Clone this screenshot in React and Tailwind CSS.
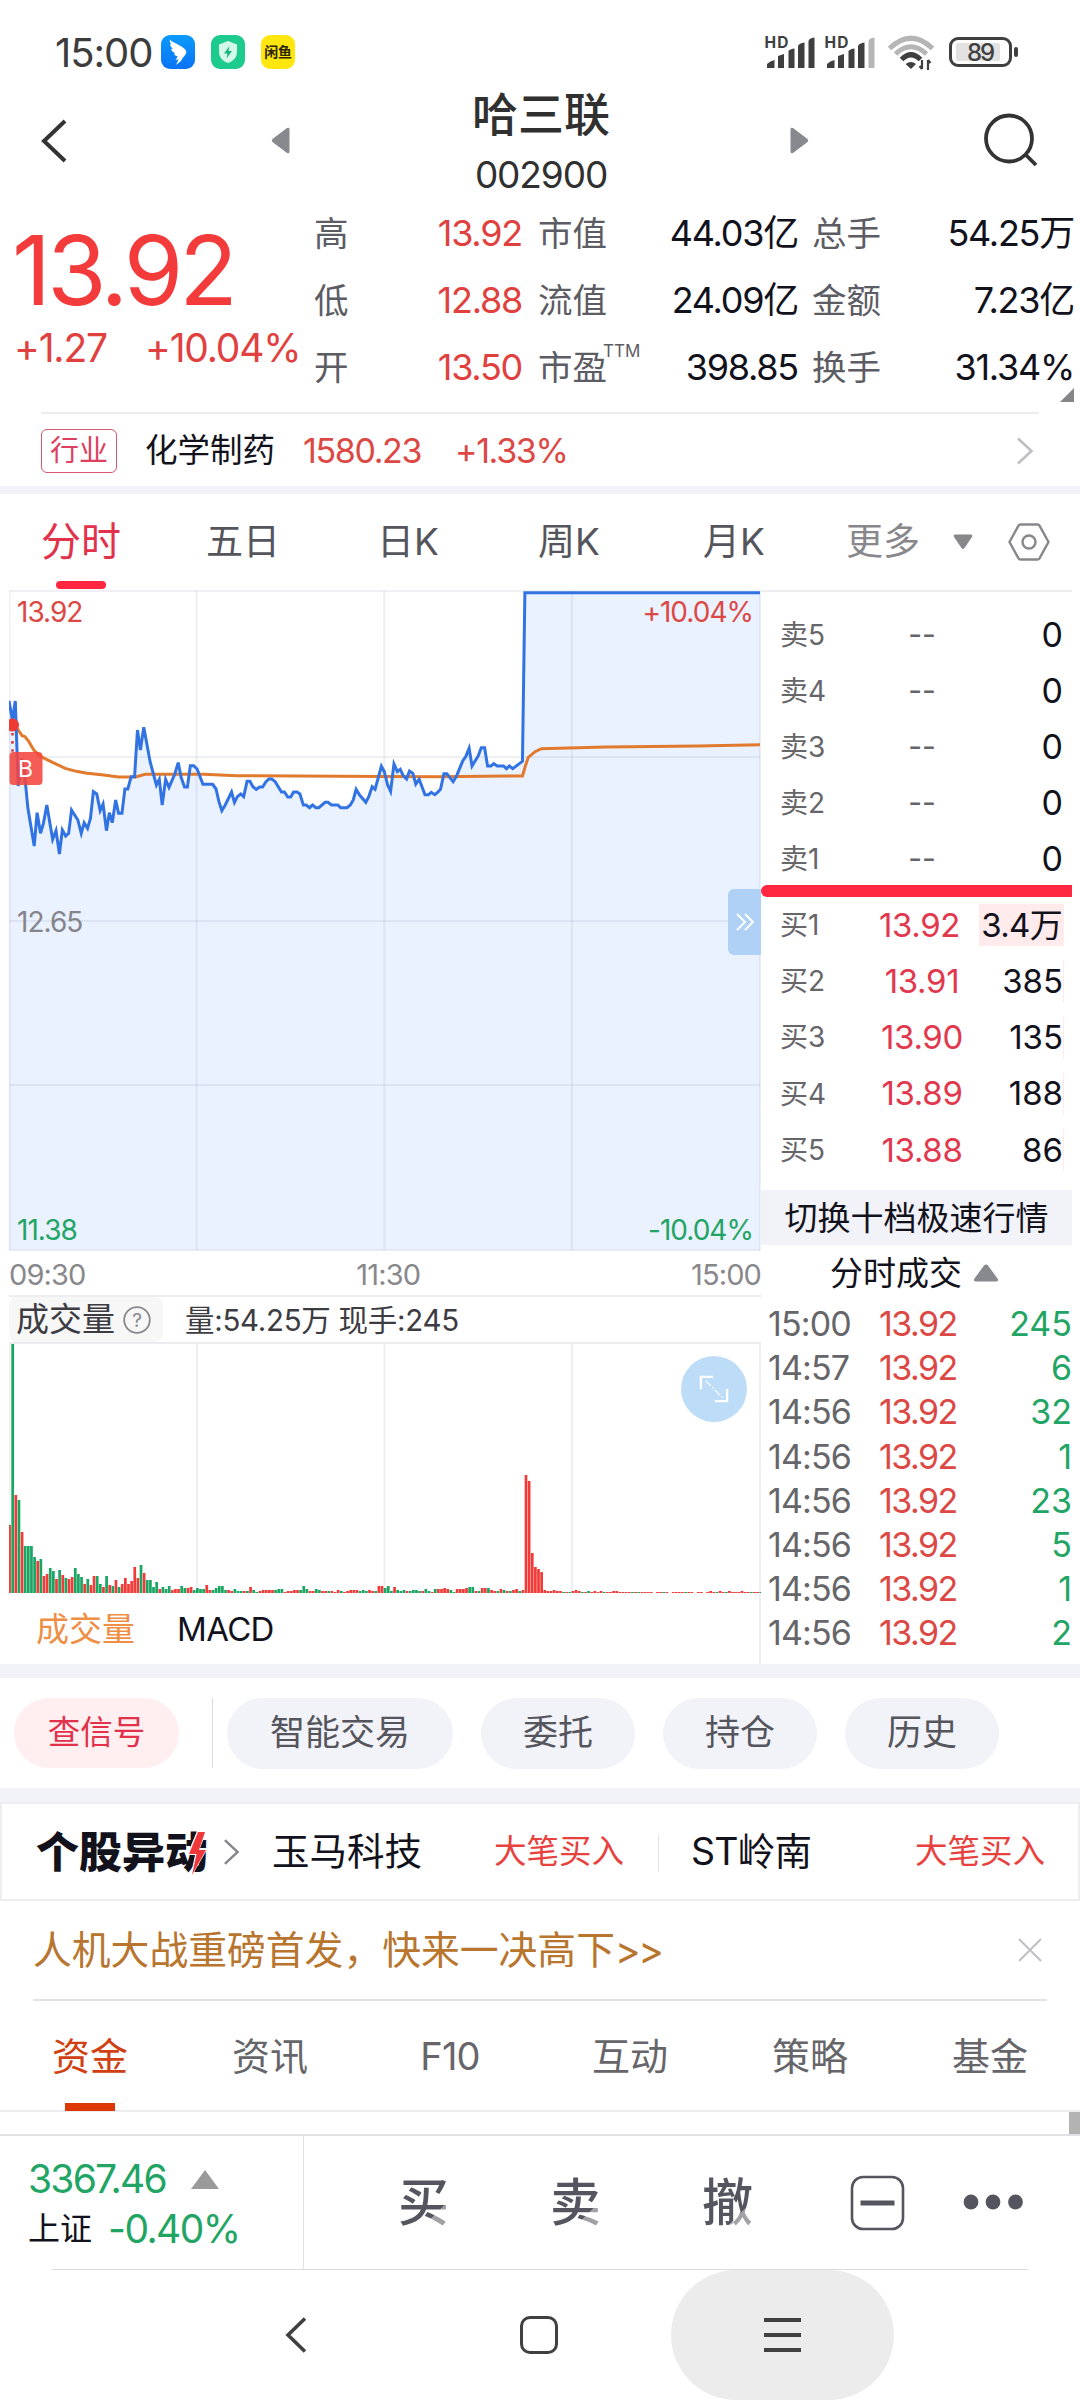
import React from "react";

const stats = [
  [
    { label: "高", value: "13.92" },
    { label: "低", value: "12.88" },
    { label: "开", value: "13.50" },
  ],
  [
    { label: "市值", value: "44.03亿" },
    { label: "流值", value: "24.09亿" },
    { label: "市盈", value: "398.85", sup: "TTM" },
  ],
  [
    { label: "总手", value: "54.25万" },
    { label: "金额", value: "7.23亿" },
    { label: "换手", value: "31.34%" },
  ],
];

const statStyles = [
  "ml-[314px] w-[208px] text-[#e0413f]",
  "ml-[16px] w-[260px] text-[#12121c]",
  "ml-[14px] w-[262px] text-[#12121c]",
];

const sells = ["卖5", "卖4", "卖3", "卖2", "卖1"];

const buys = [
  { label: "买1", price: "13.92", count: "3.4万" },
  { label: "买2", price: "13.91", count: "385" },
  { label: "买3", price: "13.90", count: "135" },
  { label: "买4", price: "13.89", count: "188" },
  { label: "买5", price: "13.88", count: "86" },
];

const trades = [
  ["15:00", "245"],
  ["14:57", "6"],
  ["14:56", "32"],
  ["14:56", "1"],
  ["14:56", "23"],
  ["14:56", "5"],
  ["14:56", "1"],
  ["14:56", "2"],
  ["14:56", "24"],
];

// price curve, x in minutes * 6.46, y grows downwards
const pricePoints =
  "19,633 26,690 32,633 38,888 45,806 51,850 58,955 71,1068 77,968 84,1030 90,1000 97,945 109,1048 116,1022 123,1092 129,1020 136,1038 142,1030 148,960 161,990 168,1030 174,998 181,1015 187,985 193,905 200,912 207,962 213,942 220,1022 226,968 232,998 239,930 245,970 252,970 258,897 264,897 271,860 278,860 284,720 290,780 297,712 310,815 323,885 329,868 335,945 342,868 349,892 361,852 368,818 374,862 381,891 387,891 393,827 400,827 407,837 419,883 439,883 446,897 452,935 458,962 465,945 478,906 484,937 490,920 497,912 503,920 510,874 516,874 522,890 529,898 536,891 542,891 549,875 555,867 561,867 568,875 581,906 587,906 594,921 600,921 606,906 613,906 619,912 626,945 632,945 639,953 645,945 652,953 658,953 671,937 677,937 684,945 697,945 703,953 716,953 723,945 729,930 735,898 742,915 755,937 761,920 768,890 774,898 787,829 793,845 800,885 806,904 813,822 820,845 826,838 832,857 839,867 845,843 852,850 858,882 865,868 877,914 884,914 890,907 897,914 903,907 909,898 916,851 922,851 935,875 942,858 955,812 961,800 968,775 974,828 987,797 993,773 1000,773 1006,828 1013,828 1019,821 1026,828 1039,828 1045,836 1051,828 1058,836 1078,814 1083,308 1568,308";

const avgPoints =
  "27,690 38,720 46,737 52,740 60,755 71,782 85,800 110,818 135,835 158,844 180,850 210,854 245,861 280,861 300,853 420,853 490,857 700,859 900,860 1078,858 1084,828 1090,802 1104,785 1117,776 1250,771 1440,768 1568,764";

const volumes =
  "r68 g250 r98 g93 r61 g47 g47 g47 g36 r32 g34 r17 r19 g25 g22 r14 g23 r18 g15 r14 r16 g25 g19 g16 r9 g14 r8 r17 g17 g9 r6 g17 r8 g7 r13 g6 r9 r15 r9 r12 r26 r15 g28 r20 g13 g13 g6 g11 r4 g6 g4 g7 r3 r4 r4 g7 g5 r5 r6 g3 g5 g4 g4 r8 r3 g3 g5 g7 g7 g3 r3 r2 g4 g2 g2 r2 g2 r6 g3 g1 r2 r3 r3 r3 r3 g3 g4 g4 r1 r2 r2 r3 r3 g3 g7 g4 r2 r2 g4 g3 r2 r2 g2 r2 r1 r3 g2 r1 r2 r3 r3 r3 g2 g3 g2 r3 r2 g2 r7 r7 g5 g7 g2 r6 g3 g2 g3 r2 g2 g3 g3 g2 r2 g4 g2 r1 g4 r4 r4 r5 r4 g3 g1 r4 r4 r4 r5 g6 g6 r2 g2 r5 r5 g5 r3 r2 g2 r4 g3 r2 g2 r3 r4 g2 r3 r118 r112 r40 r26 r24 r21 r3 r2 r2 r3 r2 r2 g1 r1 g1 r2 r3 r2 g1 r1 g2 r1 r2 r1 r2 g1 r1 r1 r2 r2 r1 r1 r1 r1 g1 r1 g1 r1 r1 r1 r1 g0 r1 r1 g1 r1 r0 r1 r1 r1 r1 g1 r1 r1 r0 r1 r1 g0 r1 r2 r1 g1 r2 r1 g1 r2 r1 r1 r1 r2 r1 r1 g1 r1 r1 g1 g0 r0 r2".split(
    " "
  );

const RightChevron = ({ className, color }) => (
  <svg className={className} viewBox="0 0 18 28" fill="none" stroke={color} strokeWidth="2.6">
    <path d="M2 1.5 L15.5 14 L2 26.5" />
  </svg>
);

const StatusBar = () => (
  <div className="flex h-[88px] items-center pt-[16px] pl-[55px]">
    <span className="w-[106px] pt-px text-[40px] tracking-[-0.025em] text-[#3c3c3c]">15:00</span>
    <div className="flex gap-4">
      <svg className="h-[34px] w-[34px]" viewBox="0 0 34 34">
        <defs>
          <linearGradient id="wing" x1="0" y1="0" x2="0" y2="1">
            <stop offset="0" stopColor="#0a9bfb" />
            <stop offset="1" stopColor="#0a72f6" />
          </linearGradient>
        </defs>
        <rect width="34" height="34" rx="9" fill="url(#wing)" />
        <path
          d="M9 4.5 C9.5 6 12 7 14.5 8.3 C18.5 10.4 25 13.5 25.3 16.8 C25 19.5 23 21.5 21.2 23.8 L20 26 L15 30 L17.5 24.5 L14.5 24.8 L16.8 21.5 C14.5 21 13.3 20 12.8 18.8 L14.5 18.5 C11.5 17 10.3 15.5 10.2 13.8 L12 14 C9.8 12 9 10.5 9.2 9 L10.5 9.3 C8.800 7.5 8.5 6 9 4.5 Z"
          fill="#fff"
        />
      </svg>
      <svg className="h-[34px] w-[34px]" viewBox="0 0 34 34">
        <rect width="34" height="34" rx="9" fill="#1ecb8f" />
        <path d="M17 6 L26 9.5 V17 C26 22 22.5 26 17 28 C11.5 26 8 22 8 17 V9.5 Z" fill="#d6f8ec" />
        <path d="M18.5 11 L13 18.5 H16.5 L15.5 23.5 L21 16 H17.5 Z" fill="#14b57c" />
      </svg>
      <div className="flex h-[34px] w-[34px] items-center justify-center rounded-[9px] bg-[#ffe60f] text-[14px] font-bold tracking-tight text-[#2a2600]">
        闲鱼
      </div>
    </div>
    <svg className="ml-[468px] h-[38px] w-[260px]" viewBox="763 33 260 38">
      <g fill="#3f3f3f">
        <path d="M767 68 V64 Q770 61 774.5 60 V68 Z M778 68 V56 L784 54 V68 Z M788.5 68 V51 Q790 49 794.5 48.5 V68 Z M798 68 V46 Q799 43 804.5 42.5 V68 Z M808.5 68 V41 Q809 38 814.5 37.5 V68 Z" />
        <path d="M827 68 V64 Q830 61 834.5 60 V68 Z M838 68 V56 L844 54 V68 Z M848.5 68 V51 Q850 49 854.5 48.5 V68 Z M858 68 V46 Q859 43 864.5 42.5 V68 Z" />
        <path d="M868.5 68 V41 Q869 38 874.5 37.5 V68 Z" fill="#b5b5b5" />
        <text x="764.5" y="48" fontSize="15.5" fontWeight="700" textLength="24">HD</text>
        <text x="824.5" y="48" fontSize="15.5" fontWeight="700" textLength="24">HD</text>
        <path d="M905.5 64 Q911 60 916 64 L911 69 Z" />
        <path d="M922 60 V69 M919.5 66 L922 69 M928 70 V60 M930.5 63 L928 60" stroke="#3f3f3f" strokeWidth="2.2" />
      </g>
      <g fill="none" strokeWidth="5">
        <path d="M889.5 48.5 Q911 28 932.5 48.5" stroke="#b5b5b5" />
        <path d="M895.5 54 Q911 39.5 926.5 54" stroke="#b5b5b5" />
        <path d="M901.5 59.5 Q911 50 920.5 59.5" stroke="#3f3f3f" />
      </g>
      <rect x="956" y="43" width="44" height="18" rx="2" fill="#e2e2e2" />
      <rect x="950.5" y="38.5" width="60" height="27" rx="7.5" fill="none" stroke="#3f3f3f" strokeWidth="3" />
      <rect x="1014" y="47" width="4" height="10" rx="2" fill="#3f3f3f" />
      <text x="981" y="60.5" fontSize="24" fontWeight="500" fill="#3f3f3f" textAnchor="middle" textLength="28">89</text>
    </svg>
  </div>
);

const Header = () => (
  <div className="flex h-[111px] items-start text-[#303030]">
    <svg className="mt-[30px] ml-[40px] h-[46px] w-[28px]" viewBox="0 0 28 46" fill="none" stroke="#333" strokeWidth="4">
      <path d="M25 3 L4 23 L25 43" />
    </svg>
    <svg className="mt-[39px] ml-[203px] h-[27px] w-[19px]" viewBox="0 0 19 27">
      <path d="M18.5 2 V25 Q18 27 16 26 L1.5 15 Q0 13.5 1.5 12 L16 1 Q18 0 18.5 2 Z" fill="#88888f" />
    </svg>
    <div className="ml-[151px] flex w-[200px] flex-col items-center">
      <div className="flex h-[54px] items-center text-[46px] font-medium">哈三联</div>
      <div className="flex h-[66px] items-center text-[37px] tracking-[-0.03em]">002900</div>
    </div>
    <svg className="mt-[39px] ml-[149px] h-[27px] w-[19px]" viewBox="0 0 19 27">
      <path d="M0.5 2 V25 Q1 27 3 26 L17.5 15 Q19 13.5 17.5 12 L3 1 Q1 0 0.5 2 Z" fill="#88888f" />
    </svg>
    <svg className="mt-[25px] ml-[174px] h-[56px] w-[58px]" viewBox="0 0 58 56" fill="none" stroke="#333" strokeWidth="3.8">
      <circle cx="26" cy="25.5" r="23" />
      <path d="M42 41 L53 52" />
    </svg>
  </div>
);

const Quote = () => (
  <div className="relative flex h-[213px] pt-px">
    <div className="absolute top-[15px] left-[12px]">
      <div className="flex h-[112px] items-center text-[96px] tracking-[-0.04em] text-[#f43b3b]">13.92</div>
      <div className="flex h-[44px] items-center pl-[2px] text-[39px] tracking-[-0.03em] whitespace-nowrap text-[#e0413f]">
        <span className="w-[131px]">+1.27</span>
        <span>+10.04%</span>
      </div>
    </div>
    {stats.map((col, i) => (
      <div key={i} className={`flex flex-col ${statStyles[i]}`}>
        {col.map((item) => (
          <div key={item.label} className="flex h-[67px] items-center justify-between text-[36px] tracking-[-0.035em]">
            <span className="relative text-[34.5px] tracking-normal text-[#5c5c64]">
              {item.label}
              {item.sup && <span className="absolute top-[-5px] left-[65px] text-[17px]">{item.sup}</span>}
            </span>
            <span>{item.value}</span>
          </div>
        ))}
      </div>
    ))}
    <svg className="absolute right-[6px] bottom-[10px] h-[14px] w-[14px]" viewBox="0 0 14 14">
      <path d="M14 0 V14 H0 Z" fill="#85858a" />
    </svg>
  </div>
);

const Industry = () => (
  <div className="mx-[41px] flex h-[74px] items-center border-t-2 border-[#ececee] pt-[2px]">
    <div className="flex h-[44px] w-[76px] items-center justify-center rounded-md border-[1.5px] border-[#d9566f] text-[29px] text-[#dd3f5e]">
      行业
    </div>
    <span className="ml-[28px] w-[158px] text-[32.5px] text-[#12121c]">化学制药</span>
    <span className="w-[152px] text-[34px] tracking-[-0.04em] text-[#dc4844]">1580.23</span>
    <span className="text-[34px] tracking-[-0.04em] text-[#dc4844]">+1.33%</span>
    <RightChevron className="ml-auto mr-[5px] h-[28px] w-[18px]" color="#bfbfc3" />
  </div>
);

const PeriodTabs = () => (
  <div className="flex h-[96px] items-center text-[37px] text-[#55555d]">
    <div className="relative ml-[41px] w-[165px] text-[40px] text-[#e2314a]">
      分时
      <span className="absolute -bottom-[22px] left-[15px] h-[8px] w-[50px] rounded-full bg-[#ff2840]" />
    </div>
    <span className="w-[171px]">五日</span>
    <span className="w-[161px]">日K</span>
    <span className="w-[165px]">周K</span>
    <span className="w-[143px]">月K</span>
    <span className="w-[107px] text-[#88888c]">更多</span>
    <svg className="h-[16px] w-[20px]" viewBox="0 0 20 16">
      <path d="M2 0.5 H18 Q20 1 19 3 L11.5 14 Q10 16 8.5 14 L1 3 Q0 1 2 0.5 Z" fill="#88888c" />
    </svg>
    <svg className="ml-[35px] h-[38px] w-[42px]" viewBox="0 0 42 38" fill="none" stroke="#88888c" strokeWidth="2.4">
      <path d="M12.5 1.5 H29.5 Q30.8 1.5 31.5 2.7 L40.5 19 L31.5 35.3 Q30.8 36.5 29.5 36.5 H12.5 Q11.2 36.5 10.5 35.3 L1.5 19 L10.5 2.7 Q11.2 1.5 12.5 1.5 Z" />
      <circle cx="21" cy="19" r="6.5" />
    </svg>
  </div>
);

const PriceChart = () => (
  <div className="relative h-[661px] w-[752px] text-[28px] tracking-[-0.035em]">
    <svg className="h-full w-full" viewBox="19 300 1551 1983" preserveAspectRatio="none">
      <polygon points={`19,2281 ${pricePoints} 1568,2281`} fill="#eaf1ff" />
      <g stroke="#8088a0" strokeOpacity="0.13" strokeWidth="2" fill="none">
        {[20, 406, 793, 1180, 1568].map((x) => (
          <path key={x} d={`M${x} 303 V2281`} vectorEffect="non-scaling-stroke" />
        ))}
        {[303, 801, 1293, 1785, 2281].map((y) => (
          <path key={y} d={`M19 ${y} H1568`} vectorEffect="non-scaling-stroke" />
        ))}
      </g>
      <polyline points={avgPoints} fill="none" stroke="#e27a2e" strokeWidth="3" vectorEffect="non-scaling-stroke" />
      <polyline points={pricePoints} fill="none" stroke="#3273e3" strokeWidth="3" vectorEffect="non-scaling-stroke" />
    </svg>
    <svg className="absolute top-[124px] left-0 h-[73px] w-[36px]" viewBox="0 0 36 73">
      <circle cx="3.5" cy="11" r="6.5" fill="#ee3a33" />
      <path d="M3.5 19 V38" stroke="#d8433f" strokeWidth="2.6" strokeDasharray="2.6 5.5" />
      <rect x="0.5" y="38" width="33" height="33" rx="4" fill="#f4453f" fillOpacity="0.88" />
      <text x="16" y="63" fontSize="23" fill="#fff" textAnchor="middle">B</text>
    </svg>
    <span className="absolute top-[5px] left-[8px] text-[#dc4844]">13.92</span>
    <span className="absolute top-[5px] right-[8px] text-[#dc4844]">+10.04%</span>
    <span className="absolute top-[315px] left-[8px] text-[#85858c]">12.65</span>
    <span className="absolute bottom-[3px] left-[8px] text-[#22a564]">11.38</span>
    <span className="absolute right-[8px] bottom-[3px] text-[#22a564]">-10.04%</span>
    <div className="absolute top-[299px] right-0 flex h-[66px] w-[33px] items-center justify-center rounded-l-md bg-[#aed1f5]">
      <svg className="h-[18px] w-[20px]" viewBox="0 0 20 18" fill="none" stroke="#fff" strokeWidth="2">
        <path d="M2 1 L10 9 L2 17 M10 1 L18 9 L10 17" />
      </svg>
    </div>
  </div>
);

const VolumeChart = () => (
  <div className="relative h-[251px] w-[752px] border-t-2 border-[#ececee]">
    <svg className="h-full w-full" viewBox="0 0 752 249">
      <path d="M0.5 0 V249 M188 0 V249 M375.5 0 V249 M563 0 V249 M751 0 V249" stroke="#f0f0f2" strokeWidth="2" />
      {volumes.map((v, i) => (
        <rect
          key={i}
          x={i * 3.13 - 0.8}
          y={249 - Number(v.slice(1))}
          width="2.7"
          height={v.slice(1)}
          fill={v[0] === "r" ? "#f03b38" : "#1aa562"}
        />
      ))}
    </svg>
    <div className="absolute top-[12px] right-[14px] flex h-[66px] w-[66px] items-center justify-center rounded-full bg-[#bcdcf7]">
      <svg className="h-[30px] w-[30px]" viewBox="0 0 32 32" fill="none" stroke="#fff" strokeWidth="2.4">
        <path d="M2 16 V3 H15 M30 16 V29 H17" />
        <path d="M7 7 L26 26" strokeWidth="1.3" strokeDasharray="8 2 2 2" />
      </svg>
    </div>
  </div>
);

const ChartPanel = () => (
  <div className="h-[1074px] w-[761px] pl-[9px]">
    <PriceChart />
    <div className="flex h-[46px] items-center justify-between border-b-2 border-[#ededf0] pt-[4px] text-[29px] tracking-[-0.03em] text-[#88888c]">
      <span>09:30</span>
      <span>11:30</span>
      <span>15:00</span>
    </div>
    <div className="flex h-[45px] items-center text-[#3c3c42]">
      <div className="flex h-full w-[154px] items-center rounded-lg bg-[#f7f7f8] pt-px pl-[7px] text-[33px]">
        成交量
        <svg className="ml-[8px] h-[28px] w-[28px]" viewBox="0 0 28 28">
          <circle cx="14" cy="14" r="12.8" fill="none" stroke="#88888c" strokeWidth="1.8" />
          <text x="14" y="20.5" fontSize="19" fill="#88888c" textAnchor="middle">?</text>
        </svg>
      </div>
      <span className="ml-[22px] pt-[2px] text-[29.5px] tracking-[-0.01em]">量:54.25万 现手:245</span>
    </div>
    <VolumeChart />
    <div className="flex h-[71px] items-center border-r-2 border-[#ededf0] pt-[2px] pl-[27px] text-[33px]">
      <span className="w-[141px] text-[#ef8e45]">成交量</span>
      <span className="tracking-[-0.02em] text-[#12121c]">MACD</span>
    </div>
  </div>
);

const OrderBook = () => (
  <div className="h-[1074px] w-[311px] overflow-hidden border-t-2 border-[#ececee] pt-[15px]">
    {sells.map((label) => (
      <div key={label} className="flex h-[56px] items-center pl-[19px] pr-[9px] text-[34px] text-[#12121c]">
        <span className="w-[81px] text-[28px] text-[#66666a]">{label}</span>
        <span className="w-[122px] text-center text-[30px] text-[#66666a]">--</span>
        <span className="flex-1 text-right">0</span>
      </div>
    ))}
    <div className="-mt-[2px] h-[12px] rounded-l-full bg-[#ff2840]" />
    {buys.map((row, i) => (
      <div key={row.label} className="flex h-[56.3px] items-center pl-[19px] pr-[8px] text-[33px] text-[#12121c]">
        <span className="w-[81px] text-[28px] text-[#66666a]">{row.label}</span>
        <span className="w-[122px] text-center tracking-[-0.01em] text-[#e2384d]">{row.price}</span>
        <span
          className={`ml-auto flex h-[42px] items-center justify-end ${i === 0 ? "w-[86px] bg-[#ffeaec] pr-[2px] tracking-[-0.02em]" : "border-r border-[#ffeaec]"}`}
        >
          {row.count}
        </span>
      </div>
    ))}
    <div className="mt-[12px] flex h-[55px] items-center justify-center bg-[#f2f3f8] pt-px text-[33px] text-[#12121c]">
      切换十档极速行情
    </div>
    <div className="flex h-[55px] items-center pt-px pl-[69px] text-[33px] text-[#12121c]">
      分时成交
      <svg className="ml-[11px] h-[18px] w-[26px]" viewBox="0 0 26 18">
        <path d="M2.5 17.5 Q0 17 1.5 14.5 L11 1.5 Q13 -0.5 15 1.5 L24.5 14.5 Q26 17 23.5 17.5 Z" fill="#88888f" />
      </svg>
    </div>
    <div className="pt-[2px]">
      {trades.map(([time, count], i) => (
        <div key={i} className="flex h-[44.1px] items-center pl-[7px] text-[34px]">
          <span className="w-[111px] tracking-[-0.025em] text-[#66666a]">{time}</span>
          <span className="tracking-[-0.045em] text-[#dc4844]">13.92</span>
          <span className="ml-auto text-[#22a564]">{count}</span>
        </div>
      ))}
    </div>
  </div>
);

const Shortcuts = () => (
  <div className="flex h-[110px] items-center pl-[14px] text-[35px] text-[#55555d]">
    <div className="flex h-[70px] w-[165px] items-center justify-center rounded-full bg-[#ffeff0] text-[32.5px] text-[#e2314a]">
      查信号
    </div>
    <div className="mr-[14px] ml-[33px] h-[70px] w-px bg-[#dcdce0]" />
    <div className="flex h-[71px] w-[226px] items-center justify-center rounded-full bg-[#f2f3f8]">智能交易</div>
    {["委托", "持仓", "历史"].map((name) => (
      <div key={name} className="ml-[28px] flex h-[71px] w-[154px] items-center justify-center rounded-full bg-[#f2f3f8]">
        {name}
      </div>
    ))}
  </div>
);

const Movers = () => (
  <div className="flex h-[99px] items-center border-2 border-[#ededef] pt-[2px] pl-[34px] text-[37.5px] text-[#12121c]">
    <div className="relative w-[187px] text-[43px] font-black text-[#12121c]">
      个股异动
      <svg className="absolute top-[5px] left-[149px] h-[48px] w-[24px]" viewBox="0 0 24 48">
        <path d="M12 0 H22 L15 17 H23 L5 48 L10 24 H2 Z" fill="#fff" />
        <path d="M13 1 H20 L14 19 H21 L7 44 L11.5 23 H4 Z" fill="#f0383c" />
      </svg>
    </div>
    <RightChevron className="-mt-px h-[28px] w-[17px]" color="#88888c" />
    <span className="ml-[32px] w-[222px]">玉马科技</span>
    <span className="w-[164px] text-[32.5px] text-[#e8423e]">大笔买入</span>
    <span className="h-[38px] w-px bg-[#e6e6ea]" />
    <span className="ml-[32px] w-[224px] tracking-[-0.02em]">ST岭南</span>
    <span className="text-[32.5px] text-[#e8423e]">大笔买入</span>
  </div>
);

const Promo = () => (
  <div className="mx-[33px] flex h-[100px] items-center justify-between border-b-2 border-[#e2e2e4] text-[38.8px] text-[#b8752e]">
    <span>
      人机大战重磅首发，快来一决高下<span className="tracking-[-0.06em]">&gt;&gt;</span>
    </span>
    <svg className="mr-[5px] h-[24px] w-[24px]" viewBox="0 0 24 24" stroke="#bfbfc3" strokeWidth="2">
      <path d="M1 1 L23 23 M23 1 L1 23" />
    </svg>
  </div>
);

const InfoTabs = () => (
  <div className="grid h-[111px] grid-cols-6 border-b-2 border-[#ededef] text-center text-[38px] leading-[110px] text-[#66666a]">
    <div className="relative text-[#d04012]">
      资金
      <span className="absolute bottom-0 left-[65px] h-[8px] w-[50px] bg-[#dc3704]" />
    </div>
    <div>资讯</div>
    <div className="tracking-[-0.02em]">F10</div>
    <div>互动</div>
    <div>策略</div>
    <div>基金</div>
  </div>
);

const TradeBar = () => (
  <div className="flex h-[136px] border-t-2 border-[#e2e2e4]">
    <div className="w-[304px] border-r border-[#e2e2e4] pt-[18px] pl-[28px] text-[#22a564]">
      <div className="flex h-[50px] items-center text-[39px] tracking-[-0.045em]">
        <span className="w-[163px]">3367.46</span>
        <svg className="h-[19px] w-[28px]" viewBox="0 0 28 19">
          <path d="M14 0 L28 19 H0 Z" fill="#9a9a9a" />
        </svg>
      </div>
      <div className="flex h-[50px] items-center text-[39px] tracking-[-0.04em]">
        <span className="w-[80px] text-[32px] tracking-normal text-[#12121c]">上证</span>
        -0.40%
      </div>
    </div>
    <div className="flex h-full items-center text-[51px] font-medium">
      {["买", "卖", "撤"].map((name, i) => (
        <span
          key={name}
          className={`w-[51px] bg-[linear-gradient(135deg,#55555f_70%,#a0a0a5_70%)] bg-clip-text text-transparent ${i === 0 ? "ml-[94px]" : "ml-[101px]"}`}
        >
          {name}
        </span>
      ))}
      <svg className="ml-[97px] h-[56px] w-[176px]" viewBox="0 0 176 56">
        <rect x="2" y="2" width="51" height="52" rx="11" fill="none" stroke="#55555f" strokeWidth="2.6" />
        <rect x="10.5" y="25.5" width="34" height="5" fill="#55555f" />
        <circle cx="121" cy="27" r="7.4" fill="#55555f" />
        <circle cx="143" cy="27" r="7.4" fill="#55555f" />
        <circle cx="165.5" cy="27" r="7.4" fill="#55555f" />
      </svg>
    </div>
  </div>
);

const NavBar = () => (
  <div className="flex h-[130px] items-center">
    <svg className="ml-[285px] h-[38px] w-[22px]" viewBox="0 0 22 38" fill="none" stroke="#404040" strokeWidth="3.6">
      <path d="M20 2.5 L3 19 L20 35.5" />
    </svg>
    <div className="ml-[213px] h-[38px] w-[38px] rounded-[10px] border-[3.6px] border-[#404040]" />
    <div className="ml-[113px] flex h-[130px] w-[223px] flex-col items-center justify-center gap-[11px] rounded-[65px] bg-[#ececec]">
      <span className="h-[4px] w-[37px] bg-[#404040]" />
      <span className="h-[4px] w-[37px] bg-[#404040]" />
      <span className="h-[4px] w-[37px] bg-[#404040]" />
    </div>
  </div>
);

const App = () => {
  return (
    <div className="h-[2400px] w-[1080px] overflow-hidden bg-white font-[Inter,'Noto_Sans_CJK_SC',sans-serif] leading-tight font-[390]">
      <StatusBar />
      <Header />
      <Quote />
      <Industry />
      <div className="h-[8px] bg-[#f2f3f8]" />
      <PeriodTabs />
      <div className="flex h-[1074px]">
        <ChartPanel />
        <OrderBook />
      </div>
      <div className="h-[14px] bg-[#f2f3f8]" />
      <Shortcuts />
      <div className="h-[14px] bg-[#f2f3f8]" />
      <Movers />
      <Promo />
      <InfoTabs />
      <div className="flex h-[22px] justify-end">
        <div className="w-[11px] bg-[#b3b3b3]" />
      </div>
      <TradeBar />
      <div className="-mt-px mr-[52px] ml-[52px] h-px bg-[#dcdce0]" />
      <NavBar />
    </div>
  );
};

export default App;
